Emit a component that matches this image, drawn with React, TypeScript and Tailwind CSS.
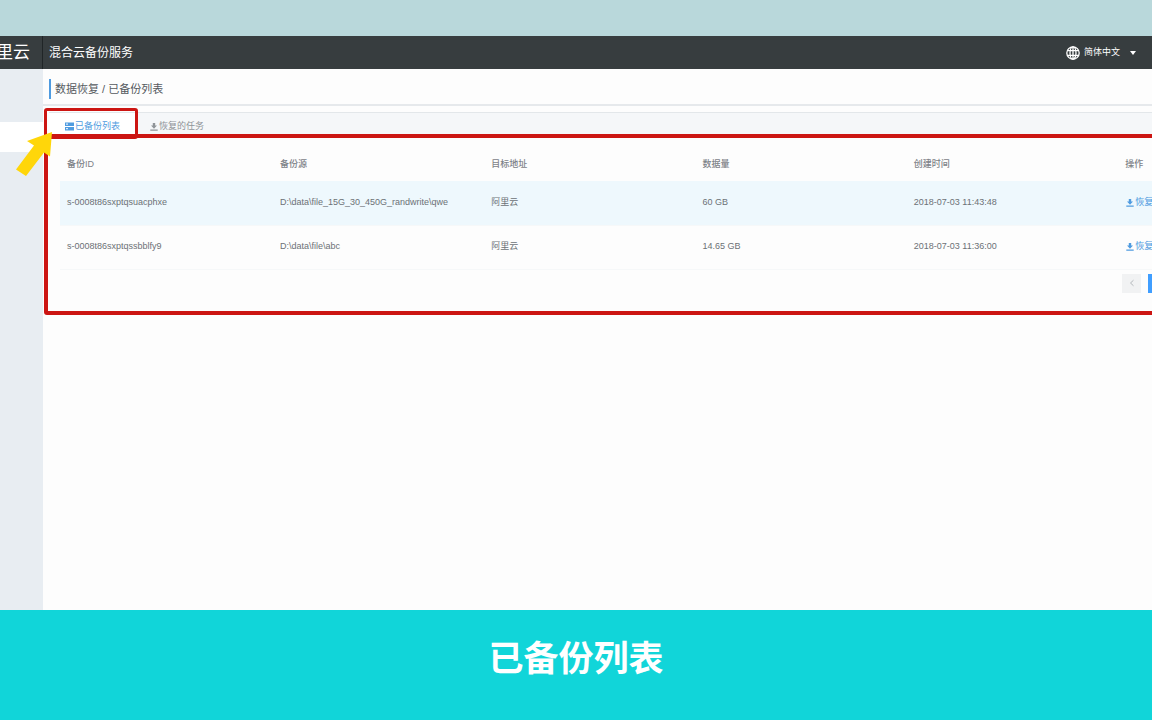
import type { ReactNode } from "react";

const rows = [
  { id: "s-0008t86sxptqsuacphxe", source: "D:\\data\\file_15G_30_450G_randwrite\\qwe", target: "阿里云", size: "60 GB", created: "2018-07-03 11:43:48" },
  { id: "s-0008t86sxptqssbblfy9", source: "D:\\data\\file\\abc", target: "阿里云", size: "14.65 GB", created: "2018-07-03 11:36:00" },
];

function Globe() {
  return (
    <svg viewBox="0 0 14 14" className="h-3.5 w-3.5" fill="none" stroke="currentColor" strokeWidth="1.3" aria-hidden="true">
      <circle cx="7" cy="7" r="6.2" />
      <ellipse cx="7" cy="7" rx="3" ry="6.2" />
      <path d="M7 .7v12.6M1.3 4.7h11.4M1.3 9.3h11.4" />
    </svg>
  );
}

function DownloadIcon() {
  return (
    <svg viewBox="0 0 8 8" className="h-2 w-2 shrink-0" fill="currentColor" aria-hidden="true">
      <path d="M2.8 0h2.4v2.6H7L4 5.8 1 2.6h1.8zM.3 6.4h7.4v1.4H.3z" />
    </svg>
  );
}

function ListIcon() {
  return (
    <svg viewBox="0 0 9 9" className="h-[9px] w-[9px] shrink-0" fill="currentColor" aria-hidden="true">
      <path fillRule="evenodd" d="M0 .4h9v3.7H0zM1.2 1.6v1.2h1.6V1.6zM0 4.9h9v3.7H0zM1.2 6.1v1.2h1.6V6.1z" />
    </svg>
  );
}

function Header() {
  return (
    <header className="flex h-[33px] items-stretch bg-[#373d3f] text-white">
      <div className="flex w-[43px] shrink-0 items-center justify-end overflow-hidden border-r border-[#202527] pr-3 text-[17px] whitespace-nowrap">
        <span className="shrink-0">阿里云</span>
      </div>
      <h1 className="flex flex-1 items-center pl-1.5 text-[12px]">混合云备份服务</h1>
      <button type="button" className="flex items-center gap-1 pr-4 text-[9px]">
        <Globe />
        <span className="pt-px">简体中文</span>
        <svg viewBox="0 0 6 4" className="ml-1.5 h-1 w-1.5" aria-hidden="true">
          <path d="M0 0h6L3 4z" fill="currentColor" />
        </svg>
      </button>
    </header>
  );
}

function HeadCell({ className, children }: { className: string; children?: ReactNode }) {
  return <th scope="col" className={`${className} h-[34px] pt-0.5 pl-[7px] text-left font-medium text-[#7d8288]`}>{children}</th>;
}

function BackupTable() {
  return (
    <table className="w-full table-fixed border-collapse text-[9px] whitespace-nowrap text-[#6c7176]">
      <thead>
        <tr>
          <HeadCell className="w-[19.5%]">备份ID</HeadCell>
          <HeadCell className="w-[19.35%]">备份源</HeadCell>
          <HeadCell className="w-[19.35%]">目标地址</HeadCell>
          <HeadCell className="w-[19.35%]">数据量</HeadCell>
          <HeadCell className="w-[19.35%]">创建时间</HeadCell>
          <HeadCell className="">操作</HeadCell>
        </tr>
      </thead>
      <tbody>
        {rows.map((row) => (
          <tr key={row.id} className="h-11 border-b border-[#f6f8f9] first:bg-[#eef8fd]">
            <td className="pl-[7px]">{row.id}</td>
            <td className="pl-[7px]">{row.source}</td>
            <td className="pl-[7px]">{row.target}</td>
            <td className="pl-[7px]">{row.size}</td>
            <td className="pl-[7px]">{row.created}</td>
            <td className="pl-2">
              <button type="button" className="flex items-center gap-px text-[#4f9be0]">
                <DownloadIcon />
                恢复
              </button>
            </td>
          </tr>
        ))}
      </tbody>
    </table>
  );
}

export default function App() {
  return (
    <div className="flex min-h-screen flex-col overflow-hidden bg-[#fdfdfd] font-['Liberation_Sans','Noto_Sans_CJK_SC',sans-serif]">
      <div className="h-9 bg-[#b9d8db]" />
      <Header />
      <div className="flex flex-1">
        <aside className="w-[43px] shrink-0 bg-[#e8edf2] pt-[53px]">
          <div className="h-[30px] bg-white" />
        </aside>
        <main className="min-w-0 flex-1">
          <div className="flex h-[37px] items-center border-b-2 border-[#e6e9ec] pt-1 pl-1.5">
            <h2 className="flex h-5 items-center border-l-2 border-[#4f9be0] pt-0.5 pl-1 text-[11px] text-[#555a5f]">数据恢复 / 已备份列表</h2>
          </div>
          <section className="relative mt-1.5 ml-1.5">
            <div role="tablist" className="flex h-6 border-t border-[#e3e7ea] bg-[#f5f7f9] text-[9px]">
              <button type="button" role="tab" aria-selected="true" className="flex w-[87px] items-center gap-px bg-white pt-1 pl-4 text-[#4f9be0]">
                <ListIcon />
                已备份列表
              </button>
              <button type="button" role="tab" aria-selected="false" className="flex items-center gap-px pt-1 pl-3.5 text-[#8f9498]">
                <DownloadIcon />
                恢复的任务
              </button>
            </div>
            <div className="pt-[11px] pb-[22px] pl-[11px]">
              <BackupTable />
              <nav aria-label="分页" className="mt-1 ml-auto flex w-[30px] gap-[7px] overflow-hidden">
                <button type="button" aria-label="上一页" className="flex h-[19px] w-[19px] shrink-0 items-center justify-center bg-[#f1f2f3] text-[#b4b8bc]">
                  <svg viewBox="0 0 6 8" className="h-2 w-1.5" fill="none" stroke="currentColor" aria-hidden="true">
                    <path d="M4.5 1.2 1.5 4l3 2.8" />
                  </svg>
                </button>
                <button type="button" aria-label="第一页" className="h-[19px] w-[19px] shrink-0 bg-[#409eff]" />
              </nav>
            </div>
            <div className="pointer-events-none absolute top-[22px] -right-1 bottom-0 -left-[5px] rounded-[3px] border-4 border-[#cc1512]" />
            <div className="pointer-events-none absolute -top-1 -left-[5px] h-[31px] w-[94px] rounded-[3px] border-[3px] border-[#cc1512]" />
            <svg viewBox="0 0 38 46" className="pointer-events-none absolute top-[20px] -left-[34px] h-[46px] w-[38px]" aria-hidden="true">
              <path d="M37 0 12 9l7 4.500L1 37.500 11 44l18-23.500 6 4z" fill="#ffd60a" />
            </svg>
          </section>
        </main>
      </div>
      <footer className="flex h-[110px] justify-center bg-[#11d5d9] pt-6">
        <p className="text-[35px] leading-[50px] font-bold text-white">已备份列表</p>
      </footer>
    </div>
  );
}
